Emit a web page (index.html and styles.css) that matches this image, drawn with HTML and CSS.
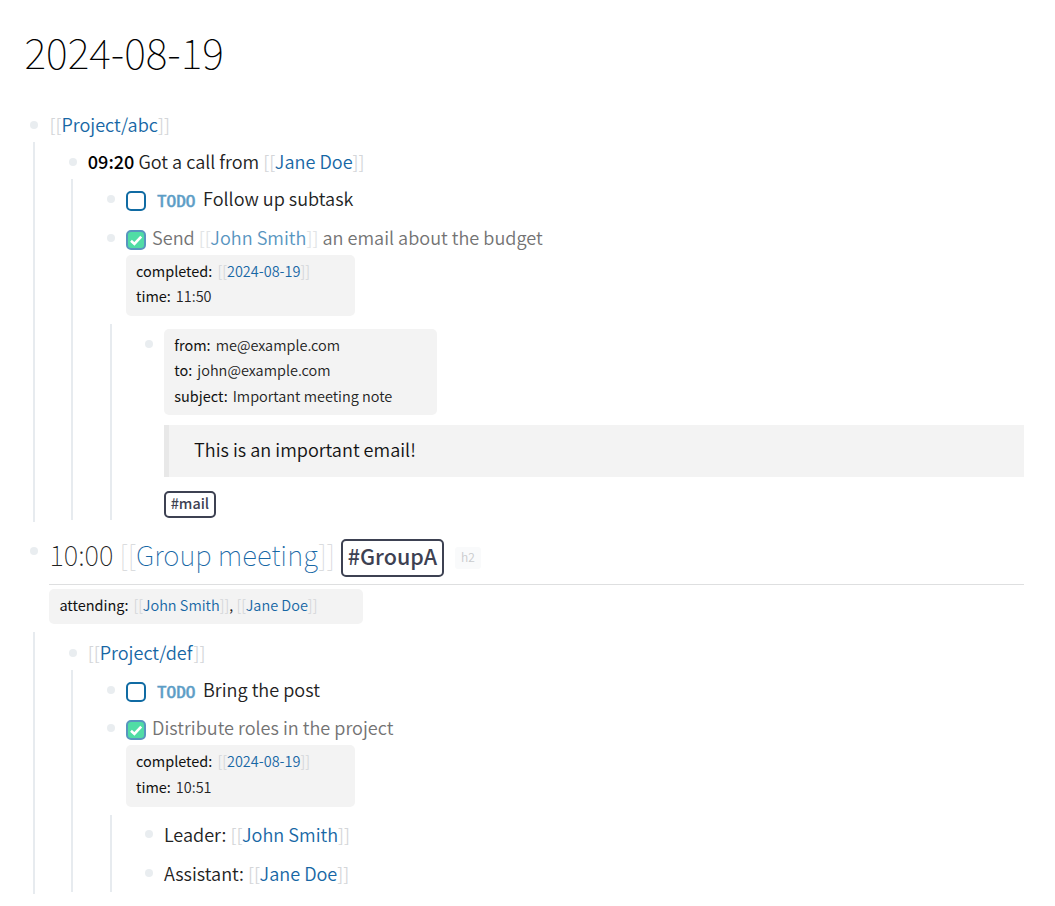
FILE: index.html
```
<!DOCTYPE html>
<html lang="en">
<head>
<meta charset="utf-8">
<title>2024-08-19</title>
<link rel="stylesheet" href="styles.css">
</head>
<body>
<svg class="defs" width="0" height="0"><symbol id="check" viewBox="0 0 20 20"><path d="M5 10.8 8.4 14 15.2 6.6" fill="none" stroke="#fff" stroke-width="2.6"/></symbol></svg>
<main class="page">
  <h1 class="title">2024-08-19</h1>

  <section class="block">
    <div class="row first"><i class="bullet"></i><p class="text"><a class="ref">Project/abc</a></p></div>
    <div class="children outer-a">
      <div class="row time"><i class="bullet"></i><p class="text"><b>09:20</b> Got a call from <a class="ref">Jane Doe</a></p></div>
      <div class="children">
        <div class="row task"><i class="bullet"></i><span class="box"></span><span class="todo">TODO</span><p class="text">Follow up subtask</p></div>
        <div class="row done"><i class="bullet"></i><span class="box checked"><svg width="20" height="20"><use href="#check"/></svg></span><p class="text">Send <a class="ref">John Smith</a> an email about the budget</p></div>
        <dl class="props completed">
          <div><dt>completed:</dt><dd><a class="ref">2024-08-19</a></dd></div>
          <div><dt>time:</dt><dd>11:50</dd></div>
        </dl>
        <div class="children mail">
          <div class="row mail-row"><i class="bullet"></i>
            <div class="content">
              <dl class="props message">
                <div><dt>from:</dt><dd>me@example.com</dd></div>
                <div><dt>to:</dt><dd>john@example.com</dd></div>
                <div><dt>subject:</dt><dd>Important meeting note</dd></div>
              </dl>
              <blockquote class="quote">This is an important email!</blockquote>
              <a class="tag">#mail</a>
            </div>
          </div>
        </div>
      </div>
    </div>
  </section>

  <section class="block">
    <div class="row heading"><i class="bullet"></i><h2 class="h2"><span>10:00</span> <a class="ref">Group meeting</a></h2><a class="tag big">#GroupA</a><span class="level">h2</span></div>
    <dl class="props attending"><div><dt>attending:</dt><dd><a class="ref">John Smith</a>, <a class="ref">Jane Doe</a></dd></div></dl>
    <div class="children outer-b">
      <div class="row project"><i class="bullet"></i><p class="text"><a class="ref">Project/def</a></p></div>
      <div class="children">
        <div class="row task"><i class="bullet"></i><span class="box"></span><span class="todo">TODO</span><p class="text">Bring the post</p></div>
        <div class="row done second"><i class="bullet"></i><span class="box checked"><svg width="20" height="20"><use href="#check"/></svg></span><p class="text">Distribute roles in the project</p></div>
        <dl class="props completed tall">
          <div><dt>completed:</dt><dd><a class="ref">2024-08-19</a></dd></div>
          <div><dt>time:</dt><dd>10:51</dd></div>
        </dl>
        <div class="children roles">
          <div class="row role"><i class="bullet"></i><p class="text">Leader: <a class="ref">John Smith</a></p></div>
          <div class="row role"><i class="bullet"></i><p class="text">Assistant: <a class="ref">Jane Doe</a></p></div>
        </div>
      </div>
    </div>
  </section>
</main>
</body>
</html>
```
FILE: styles.css
```
* { box-sizing: border-box; }
body {
  margin: 0;
  background: #fff;
  color: #222;
  font-family: "Noto Sans CJK SC", "Open Sans", sans-serif;
  font-size: 18.08px;
  font-weight: 350;
}
h1, h2, p, dl, dd, blockquote { margin: 0; }
.defs { display: block; }
.page { padding: 26px 31px 0 28px; }
.title {
  height: 81px;
  margin-left: -3.5px;
  line-height: 50px;
  font-size: 41.4px;
  font-weight: 100;
  color: #000;
}
.row { display: flex; align-items: center; height: 38px; }
.text { padding-bottom: 2px; padding-left: .5px; line-height: 30px; white-space: nowrap; }
.bullet {
  flex: none;
  width: 8px;
  height: 8px;
  margin: 0 10.6px 0 2.4px;
  border-radius: 50%;
  background: #e9edf0;
}
.children {
  margin-left: 5px;
  padding-left: 31.3px;
  border-left: 2px solid #e7ebef;
}
.first { height: 35px; }
.time { height: 37px; padding-top: 3px; }
.task { height: 40px; }
.done { height: 36px; padding-top: 1px; }
.done .box { margin-top: 4px; }
.done.second { height: 35px; }
.done.second .box { margin-top: 3px; }
.project { padding-top: 4px; }
b { font-weight: 500; color: #000; }
.ref { color: #1767a5; }
.ref::before { content: "[["; color: #d4d6d9; }
.ref::after { content: "]]"; color: #d4d6d9; }
.box {
  flex: none;
  width: 20px;
  height: 20px;
  margin-top: 3px;
  border: 2px solid #106ba3;
  border-radius: 5px;
}
.checked { border-color: #5895bf; background: #50dca5; }
.checked svg { display: block; margin: -2px; }
.todo {
  width: 39px;
  margin: 2px 7px 0 11px;
  font-family: "Noto Sans Mono CJK SC", "Noto Sans CJK SC", sans-serif;
  font-size: 15.4px;
  line-height: 20px;
  font-weight: 400;
  -webkit-text-stroke: .4px #5c9dc6;
  color: #5c9dc6;
  transform: scaleX(1.25);
  transform-origin: left;
}
.done .text { margin-left: 6px; color: #737373; }
.done .ref { color: #5895bf; }
.done .ref::before, .done .ref::after { color: #e2e4e6; }
.props {
  margin-left: 21px;
  padding: 3px 10.4px;
  border-radius: 5px;
  background: #f3f3f3;
  font-size: 14.48px;
  line-height: 25.4px;
}
.props div { display: flex; gap: 5px; white-space: nowrap; }
dt { font-weight: 400; color: #111; }
.completed { width: 229px; height: 61px; }
.tall { height: 62px; line-height: 26px; }
.mail { margin-top: 8px; height: 196px; }
.mail-row { align-items: flex-start; height: auto; padding-top: 5px; }
.mail-row .bullet { margin-top: 11px; }
.content { flex: 1; }
.message { width: 273px; height: 86px; margin-left: 0; }
.quote {
  height: 52px;
  margin: 10px 0 14px;
  padding-left: 25.2px;
  border-left: 5px solid #e8e8e8;
  background: #f3f3f3;
  line-height: 49px;
  color: #111;
}
.tag {
  display: block;
  width: 52px;
  height: 27px;
  border: 2px solid #3d4152;
  border-radius: 5px;
  color: #3d4152;
  font-size: 14.4px;
  font-weight: 500;
  line-height: 20px;
  text-align: center;
}
.heading {
  position: relative;
  align-items: flex-start;
  height: 63px;
  padding-top: 17px;
}
.heading .bullet { margin-top: 8px; }
.heading::after {
  content: "";
  position: absolute;
  right: 0;
  bottom: 0;
  left: 21px;
  height: 1px;
  background: #dedfe0;
}
.h2 { width: 285px; margin-top: -3px; padding-left: .5px; font-size: 27.6px; font-weight: 100; line-height: 36px; white-space: nowrap; }
.big { width: 103px; height: 38px; margin-left: 7px; font-size: 21.5px; line-height: 30px; }
.level {
  width: 26px;
  height: 22px;
  margin: 8px 0 0 11px;
  border-radius: 3px;
  background: #f9fafb;
  color: #c9cbcd;
  font-size: 12px;
  line-height: 20px;
  text-align: center;
}
.attending { width: 314px; height: 35px; margin-top: 4px; }
.outer-a { height: 380px; }
.outer-b { margin-top: 8px; height: 262px; }
.roles { margin-top: 8px; height: 77px; }
.role .text { padding: 0; }
.role { height: 38.6px; }
```
